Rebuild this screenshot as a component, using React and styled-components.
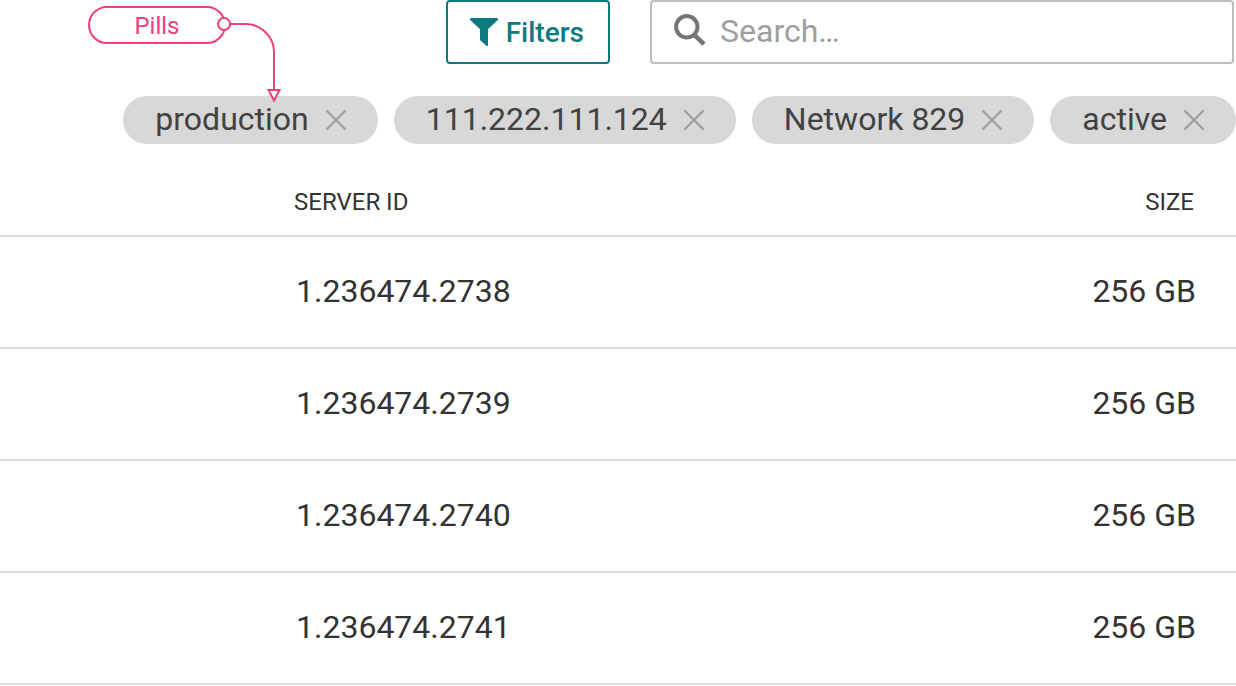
import React, { useState } from "react";
import styled, { createGlobalStyle } from "styled-components";

const GlobalStyle = createGlobalStyle`
  *, *::before, *::after { box-sizing: border-box; }
  body {
    margin: 0;
    background: #fff;
    color: #333;
    font-family: Roboto, "Liberation Sans", sans-serif;
  }
`;

const Page = styled.main`
  width: 100%;
`;

const Toolbar = styled.header`
  display: flex;
  align-items: flex-start;
  padding: 0 2px 0 88px;
`;

const Callout = styled.div`
  position: relative;
  flex: none;
  width: 138px;
  margin-top: 6px;
  padding-top: 2px;
  border: 2px solid #ec407a;
  border-radius: 20px;
  color: #ec407a;
  font-size: 24px;
  line-height: 32px;
  text-align: center;
`;

const Connector = styled.svg`
  position: absolute;
  left: 124px;
  top: 6px;
  z-index: 1;
  pointer-events: none;
`;

const FilterButton = styled.button`
  display: flex;
  align-items: center;
  gap: 8px;
  flex: none;
  height: 64px;
  margin-left: auto;
  padding: 2px 24px 0 22px;
  border: 2px solid #0b7b80;
  border-radius: 4px;
  background: #fff;
  color: #0b7b80;
  font: 500 28px/32px Roboto, "Liberation Sans", sans-serif;
  cursor: pointer;
`;

const SearchBox = styled.label`
  display: flex;
  align-items: center;
  gap: 14px;
  flex: 0 1 584px;
  min-width: 0;
  height: 64px;
  margin-left: 40px;
  padding: 0 22px 2px;
  border: 2px solid #bdbdbd;
  border-radius: 4px;
`;

const SearchIcon = styled.svg`
  flex: none;
`;

const SearchInput = styled.input`
  flex: 1;
  min-width: 0;
  padding: 0;
  border: 0;
  outline: 0;
  background: none;
  color: #333;
  font: 400 32px/40px Roboto, "Liberation Sans", sans-serif;

  &::placeholder {
    color: #9e9e9e;
    opacity: 1;
  }
`;

const PillList = styled.ul`
  display: flex;
  justify-content: flex-end;
  gap: 16px;
  margin: 32px 0 0;
  padding: 0;
  list-style: none;
`;

const Pill = styled.li`
  display: flex;
  gap: 17px;
  height: 48px;
  padding: 0 32px;
  border-radius: 24px;
  background: #d8d8d8;
  color: #424242;
  font-size: 32px;
  line-height: 46px;
  white-space: nowrap;
`;

const RemoveButton = styled.button`
  display: flex;
  align-items: center;
  padding: 0;
  border: 0;
  background: none;
  color: #9b9b9b;
  cursor: pointer;
`;

const Table = styled.table`
  width: 100%;
  border-collapse: separate;
  border-spacing: 0;
`;

const cellAlign = ({ $end }) => ($end ? "right" : "left");

const HeadCell = styled.th`
  height: 93px;
  padding: ${({ $end }) => ($end ? "24px 42px 0 0" : "24px 0 0 294px")};
  border-bottom: 2px solid #e0e0e0;
  font-size: 24px;
  font-weight: 400;
  line-height: 32px;
  text-align: ${cellAlign};
`;

const Cell = styled.td`
  height: 112px;
  padding: ${({ $end }) => ($end ? "0 40px 2px 0" : "0 0 2px 296px")};
  border-bottom: 2px solid #e0e0e0;
  font-size: 32px;
  line-height: 40px;
  text-align: ${cellAlign};
`;

const servers = [
  { id: "1.236474.2738", size: "256 GB" },
  { id: "1.236474.2739", size: "256 GB" },
  { id: "1.236474.2740", size: "256 GB" },
  { id: "1.236474.2741", size: "256 GB" },
];

export default function App() {
  const [filters, setFilters] = useState([
    "production",
    "111.222.111.124",
    "Network 829",
    "active",
  ]);

  return (
    <Page>
      <GlobalStyle />
      <Toolbar>
        <Callout>
          Pills
          <Connector width="70" height="92" viewBox="0 0 70 92" fill="#fff" stroke="#ec407a" strokeWidth="2" aria-hidden="true">
            <path d="M16 10H32C46 10 60 22 60 38V76" fill="none" />
            <circle cx="10" cy="10" r="6" />
            <path d="M54.500 76H65.500L60 86.500Z" />
          </Connector>
        </Callout>
        <FilterButton type="button">
          <svg width="28" height="30" viewBox="0 0 28 30" fill="currentColor" aria-hidden="true">
            <path d="M1 0H27Q28 0 28 1V2L18 11V27.500Q17 28.500 16 27.500L10 22V11L0 2V1Q0 0 1 0Z" />
          </svg>
          Filters
        </FilterButton>
        <SearchBox>
          <SearchIcon width="32" height="34" viewBox="0 0 32 34" fill="none" stroke="#757575" strokeWidth="4" aria-hidden="true">
            <circle cx="12.800" cy="12.800" r="10.700" />
            <path d="M19.500 20.200L30 30.200" strokeWidth="4.400" />
          </SearchIcon>
          <SearchInput type="text" placeholder="Search…" aria-label="Search" />
        </SearchBox>
      </Toolbar>
      <PillList>
        {filters.map((name) => (
          <Pill key={name}>
            {name}
            <RemoveButton
              type="button"
              aria-label={`Remove ${name}`}
              onClick={() => setFilters(filters.filter((f) => f !== name))}
            >
              <svg width="20" height="20" viewBox="0 0 20 20" stroke="currentColor" strokeWidth="2" strokeLinecap="round" aria-hidden="true">
                <path d="M1 1L19 19M19 1L1 19" />
              </svg>
            </RemoveButton>
          </Pill>
        ))}
      </PillList>
      <Table>
        <thead>
          <tr>
            <HeadCell scope="col">SERVER ID</HeadCell>
            <HeadCell scope="col" $end>SIZE</HeadCell>
          </tr>
        </thead>
        <tbody>
          {servers.map((server) => (
            <tr key={server.id}>
              <Cell>{server.id}</Cell>
              <Cell $end>{server.size}</Cell>
            </tr>
          ))}
        </tbody>
      </Table>
    </Page>
  );
}
